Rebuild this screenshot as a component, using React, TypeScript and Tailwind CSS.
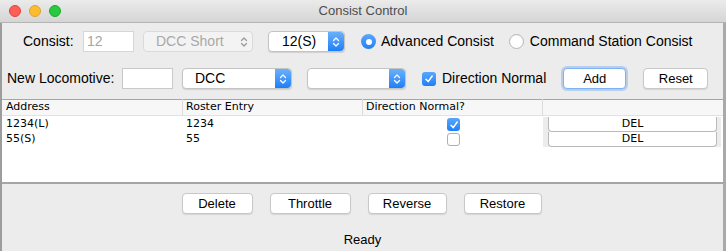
import React from 'react'

const font = "font-['Helvetica_Neue','Liberation_Sans',Arial,sans-serif]"
const tableFont = "font-['DejaVu_Sans','Liberation_Sans',sans-serif]"

const Stepper = ({ blue }: { blue: boolean }) => (
  <div
    className={`flex h-full w-[16px] items-center justify-center rounded-r-[4px] ${
      blue ? 'bg-gradient-to-b from-[#68b0fb] to-[#1a7ff8]' : ''
    }`}
  >
    <svg width="8" height="12" viewBox="0 0 8 12" fill="none">
      <path
        d="M1.5 4.5 L4 2 L6.5 4.5 M1.5 7.5 L4 10 L6.5 7.5"
        stroke={blue ? '#ffffff' : '#9a9a9a'}
        strokeWidth="1.3"
        strokeLinecap="round"
        strokeLinejoin="round"
      />
    </svg>
  </div>
)

const Combo = ({
  label,
  width,
  disabled = false,
  textClass = 'pl-[22px]',
}: {
  label: string
  width: string
  disabled?: boolean
  textClass?: string
}) => (
  <div
    className={`flex h-[21px] ${width} items-stretch rounded-[4px] border ${
      disabled
        ? 'border-[#dadada] bg-[#f3f3f3] text-[#a9a9a9]'
        : 'border-[#c4c4c4] bg-white text-black shadow-[0_1px_1px_rgba(0,0,0,0.12)]'
    }`}
  >
    <div className={`flex flex-1 items-center text-[14px] ${textClass}`}>{label}</div>
    <Stepper blue={!disabled} />
  </div>
)

const Button = ({ label, width, focus = false }: { label: string; width: string; focus?: boolean }) => (
  <div
    className={`flex h-[21px] ${width} items-center justify-center rounded-[4px] border bg-white text-[13px] text-black ${
      focus
        ? 'border-[#7eb1ef] shadow-[0_0_0_2px_rgba(120,170,240,0.45)]'
        : 'border-[#c8c8c8] shadow-[0_1px_1px_rgba(0,0,0,0.1)]'
    }`}
  >
    {label}
  </div>
)

const Radio = ({ on }: { on: boolean }) =>
  on ? (
    <div className="flex h-[15px] w-[15px] items-center justify-center rounded-full bg-gradient-to-b from-[#5aa7fb] to-[#1c80f7]">
      <div className="h-[6px] w-[6px] rounded-full bg-white" />
    </div>
  ) : (
    <div className="h-[15px] w-[15px] rounded-full border border-[#b5b5b5] bg-white shadow-[inset_0_1px_1px_rgba(0,0,0,0.06)]" />
  )

const Check = ({ on, size = 'h-[14px] w-[14px]' }: { on: boolean; size?: string }) =>
  on ? (
    <div className={`flex ${size} items-center justify-center rounded-[3px] bg-gradient-to-b from-[#5aa7fb] to-[#1c80f7]`}>
      <svg width="10" height="10" viewBox="0 0 10 10" fill="none">
        <path d="M2 5.3 L4.2 7.6 L8.2 2" stroke="#fff" strokeWidth="1.5" strokeLinecap="round" strokeLinejoin="round" />
      </svg>
    </div>
  ) : (
    <div className={`${size} rounded-[3px] border border-[#b0b0b0] bg-white`} />
  )

const rows = [
  { addr: '1234(L)', roster: '1234', dir: true },
  { addr: '55(S)', roster: '55', dir: false },
]

export default function App() {
  return (
    <div className={`flex h-[251px] w-[726px] flex-col overflow-hidden bg-[#ececec] ${font}`}>
      {/* title bar */}
      <div className="relative flex h-[23px] shrink-0 items-center border-b border-[#b4b4b4] bg-gradient-to-b from-[#ebebeb] to-[#d5d5d5]">
        <div className="ml-[9px] flex gap-[8px]">
          <div className="h-[12px] w-[12px] rounded-full border border-[#e0443e] bg-[#fd5f57]" />
          <div className="h-[12px] w-[12px] rounded-full border border-[#dea236] bg-[#fdbc2e]" />
          <div className="h-[12px] w-[12px] rounded-full border border-[#1aab29] bg-[#28c840]" />
        </div>
        <div className="absolute inset-0 flex items-center justify-center text-[13px] text-[#4d4d4d]">
          Consist Control
        </div>
      </div>

      <div className="flex flex-1 border-l-2 border-r-[3px] border-l-[#9c9c9c] border-r-[#a9a9a9]">
        <div className="flex flex-1 flex-col">
          {/* row 1 */}
          <div className="mt-[8px] flex h-[21px] items-center text-[14px]">
            <span className="ml-[21px] w-[60px]">Consist:</span>
            <div className="flex h-[21px] w-[51px] items-center border border-[#d6d6d6] bg-white pl-[3px] text-[#a6a6a6]">
              12
            </div>
            <div className="ml-[9px]">
              <Combo label="DCC Short" width="w-[110px]" disabled textClass="pl-[12px]" />
            </div>
            <div className="ml-[15px]">
              <Combo label="12(S)" width="w-[77px]" textClass="pl-[13px]" />
            </div>
            <div className="ml-[16px] flex items-center">
              <Radio on />
              <span className="ml-[5px]">Advanced Consist</span>
            </div>
            <div className="ml-[15px] flex items-center">
              <Radio on={false} />
              <span className="ml-[6px]">Command Station Consist</span>
            </div>
          </div>

          {/* row 2 */}
          <div className="mt-[16px] flex h-[21px] items-center text-[14px]">
            <span className="ml-[5px] w-[115px]">New Locomotive:</span>
            <div className="h-[21px] w-[51px] border border-[#c9c9c9] bg-white" />
            <div className="ml-[9px]">
              <Combo label="DCC" width="w-[110px]" textClass="pl-[12px]" />
            </div>
            <div className="ml-[15px]">
              <Combo label="" width="w-[99px]" />
            </div>
            <div className="ml-[16px] flex items-center">
              <Check on />
              <span className="ml-[6px]">Direction Normal</span>
            </div>
            <div className="ml-[17px]">
              <Button label="Add" width="w-[63px]" focus />
            </div>
            <div className="ml-[17px]">
              <Button label="Reset" width="w-[65px]" />
            </div>
          </div>

          {/* table */}
          <div className={`mt-[10px] h-[85px] w-[721px] border-t border-b-2 border-[#a5a5a5] bg-white ${tableFont} text-[11px] text-black`}>
            <div className="flex h-[16px] items-center border-b border-[#e2e2e2] bg-[#f7f7f7]">
              <div className="w-[181px] border-r border-[#dcdcdc] pl-[4px]">Address</div>
              <div className="w-[180px] border-r border-[#dcdcdc] pl-[3px]">Roster Entry</div>
              <div className="w-[180px] border-r border-[#dcdcdc] pl-[3px]">Direction Normal?</div>
              <div className="flex-1" />
            </div>
            <div className="mt-[1px] flex flex-col">
              {rows.map((r) => (
                <div key={r.addr} className="flex h-[15px] items-center">
                  <div className="w-[182px] pl-[4px]">{r.addr}</div>
                  <div className="w-[180px] pl-[2px]">{r.roster}</div>
                  <div className="flex w-[179px] justify-center">
                    <Check on={r.dir} size="h-[13px] w-[13px]" />
                  </div>
                  <div className="flex h-full w-[178px] items-stretch bg-[#ececec] pl-[5px] pr-[4px]">
                    <div className="flex flex-1 items-center justify-center rounded-b-[4px] border-x border-b border-[#b9b9b9] bg-white text-[11px]">
                      DEL
                    </div>
                  </div>
                </div>
              ))}
            </div>
          </div>

          {/* bottom buttons */}
          <div className="mt-[9px] flex h-[21px] justify-center gap-[17px] pr-[2px] text-[13px]">
            <Button label="Delete" width="w-[71px]" />
            <Button label="Throttle" width="w-[81px]" />
            <Button label="Reverse" width="w-[79px]" />
            <Button label="Restore" width="w-[78px]" />
          </div>

          <div className="mt-[16px] flex justify-center text-[13px] text-black">Ready</div>
        </div>
      </div>
    </div>
  )
}
